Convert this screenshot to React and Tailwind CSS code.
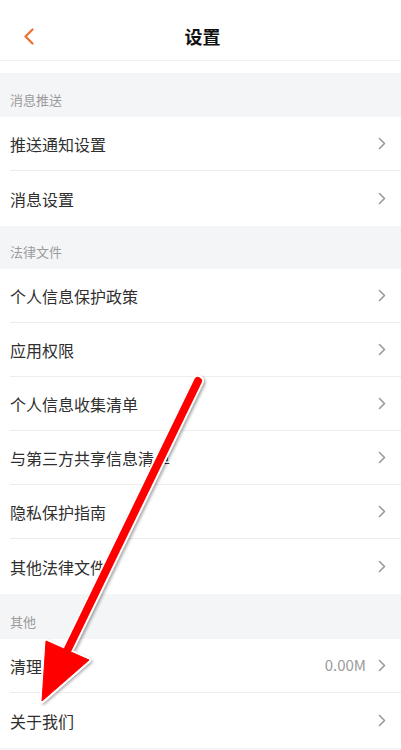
import React from 'react'

const font = { fontFamily: '"Noto Sans CJK SC", "Noto Sans", sans-serif' }

function Chevron() {
  return (
    <svg width="8" height="13" viewBox="0 0 8 13" className="shrink-0">
      <path d="M1.5 1.5 L6.5 6.5 L1.5 11.5" fill="none" stroke="#9a9a9a" strokeWidth="1.6" strokeLinecap="round" strokeLinejoin="round" />
    </svg>
  )
}

function SectionLabel({ children, h }) {
  return (
    <div className={`bg-[#f4f5f7] flex items-end px-[10px] pb-[8px] text-[13px] leading-[18px] text-[#9b9b9b] ${h}`}>
      {children}
    </div>
  )
}

function Row({ title, value, last }) {
  return (
    <div className="bg-white pl-[10px]">
      <div className={`flex items-center pr-[15px] ${last ? 'h-[55px]' : 'h-[54px] border-b border-[#ededed]'}`}>
        <span className="flex-1 text-[16px] text-[#2f2f2f]">{title}</span>
        {value && <span className="text-[15px] text-[#9b9b9b] mr-[12px]">{value}</span>}
        <Chevron />
      </div>
    </div>
  )
}

function Arrow() {
  return (
    <svg className="absolute inset-0 pointer-events-none" width="401" height="750" viewBox="0 0 401 750">
      <defs>
        <filter id="sh" x="-20%" y="-20%" width="140%" height="140%">
          <feGaussianBlur stdDeviation="1.5" />
        </filter>
      </defs>
      <g filter="url(#sh)" opacity="0.35" transform="translate(1.5 1.5)">
        <line x1="198" y1="381" x2="70" y2="645" stroke="#000" strokeWidth="12" strokeLinecap="round" />
        <polygon points="42,701 46,641 89,660" fill="#000" stroke="#000" strokeWidth="4" strokeLinejoin="round" />
      </g>
      <line x1="198" y1="381" x2="70" y2="645" stroke="#fff" strokeWidth="12" strokeLinecap="round" />
      <polygon points="42,701 46,641 89,660" fill="#fff" stroke="#fff" strokeWidth="5" strokeLinejoin="round" />
      <line x1="198" y1="381" x2="68" y2="649" stroke="#ff0000" strokeWidth="8" strokeLinecap="round" />
      <polygon points="42,701 46,641 89,660" fill="#ff0000" stroke="#ff0000" strokeWidth="1" strokeLinejoin="round" />
    </svg>
  )
}

export default function App() {
  return (
    <div className="relative w-[401px] h-[750px] overflow-hidden bg-[#f4f5f7]" style={font}>
      <div className="bg-white">
        <div className="h-[61px] flex items-center justify-center relative border-b border-[#f0f0f0]">
          <svg className="absolute left-[22px] top-[28px]" width="14" height="17" viewBox="0 0 14 17">
            <path d="M10.5 1.5 L3.5 8.5 L10.5 15.5" fill="none" stroke="#ef6f2e" strokeWidth="2.2" strokeLinecap="round" strokeLinejoin="round" />
          </svg>
          <span className="text-[18px] font-bold text-[#111] pl-[4px] pt-[12px]">设置</span>
        </div>
        <div className="h-[12px]" />
      </div>

      <SectionLabel h="h-[44px]">消息推送</SectionLabel>
      <Row title="推送通知设置" />
      <Row title="消息设置" last />

      <SectionLabel h="h-[43px]">法律文件</SectionLabel>
      <Row title="个人信息保护政策" />
      <Row title="应用权限" />
      <Row title="个人信息收集清单" />
      <Row title="与第三方共享信息清单" />
      <Row title="隐私保护指南" />
      <Row title="其他法律文件" last />

      <SectionLabel h="h-[45px]">其他</SectionLabel>
      <Row title="清理缓存" value="0.00M" />
      <Row title="关于我们" last />

      <Arrow />
    </div>
  )
}
